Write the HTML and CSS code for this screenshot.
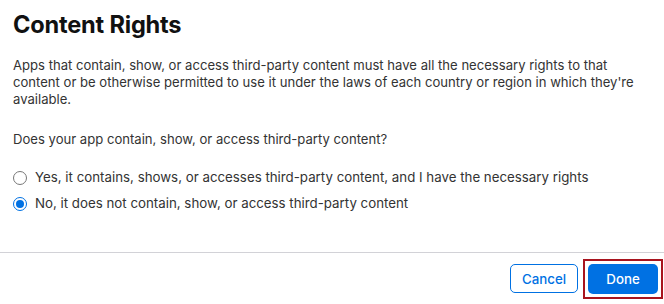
FILE: index.html
```html
<!DOCTYPE html>
<html lang="en">
<head>
    <meta charset="UTF-8">
    <meta name="viewport" content="width=device-width, initial-scale=1.0">
    <title>Content Rights</title>
    <link rel="stylesheet" href="styles.css">
</head>
<body>
    <div class="dialog">
        <div class="dialog-body">
            <h1>Content Rights</h1>
            <p class="intro">Apps that contain, show, or access third-party content must have all the necessary rights to that content or be otherwise permitted to use it under the laws of each country or region in which they're available.</p>
            <p class="question">Does your app contain, show, or access third-party content?</p>
            <div class="options">
                <label class="option">
                    <input type="radio" name="rights" value="yes">
                    <span class="radio"></span>
                    Yes, it contains, shows, or accesses third-party content, and I have the necessary rights
                </label>
                <label class="option">
                    <input type="radio" name="rights" value="no" checked>
                    <span class="radio"></span>
                    No, it does not contain, show, or access third-party content
                </label>
            </div>
        </div>
        <div class="dialog-footer">
            <button class="btn btn-secondary">Cancel</button>
            <span class="highlight">
                <button class="btn btn-primary">Done</button>
            </span>
        </div>
    </div>
</body>
</html>
```

FILE: styles.css
```css
body {
    margin: 0;
    font-family: Inter, "Noto Sans", sans-serif;
    background-color: #ffffff;
    color: #333;
}
.dialog {
    width: 664px;
    height: 304px;
    display: flex;
    flex-direction: column;
}
.dialog-body {
    padding: 9px 13px 0;
    flex: 1;
}
h1 {
    margin: 0;
    font-size: 23.6px;
    font-weight: 700;
    line-height: 32px;
    color: #111;
    letter-spacing: -0.2px;
}
.intro {
    margin: 16px 0 0;
    font-size: 13.1px;
    line-height: 17px;
}
.question {
    margin: 23px 0 0;
    font-size: 13.1px;
    line-height: 17px;
}
.options {
    margin-top: 21px;
    display: flex;
    flex-direction: column;
    gap: 9px;
}
.option {
    display: flex;
    align-items: center;
    gap: 8px;
    font-size: 13.3px;
    line-height: 17px;
    cursor: pointer;
}
.option input {
    display: none;
}
.radio {
    width: 12px;
    height: 12px;
    border: 1px solid #777;
    border-radius: 50%;
    box-sizing: content-box;
    display: inline-block;
    position: relative;
    flex-shrink: 0;
}
.option input:checked + .radio {
    border-color: #0071e3;
}
.option input:checked + .radio::after {
    content: "";
    position: absolute;
    left: 2px;
    top: 2px;
    width: 8px;
    height: 8px;
    border-radius: 50%;
    background-color: #0071e3;
}
.dialog-footer {
    border-top: 1px solid #d2d2d7;
    height: 51px;
    display: flex;
    align-items: center;
    justify-content: flex-end;
    gap: 5px;
    padding-right: 1px;
}
.btn {
    width: 69px;
    height: 30px;
    border-radius: 5px;
    font-family: Inter, "Noto Sans", sans-serif;
    font-size: 13.3px;
    font-weight: 500;
    cursor: pointer;
}
.btn-secondary {
    width: 68px;
    height: 29px;
    background-color: #fff;
    color: #0071e3;
    border: 1px solid #0071e3;
}
.btn-primary {
    width: 70px;
    background-color: #0071e3;
    color: #fff;
    border: none;
}
.highlight {
    display: inline-flex;
    padding: 3px;
    border: 2px solid #a8141e;
}
```
